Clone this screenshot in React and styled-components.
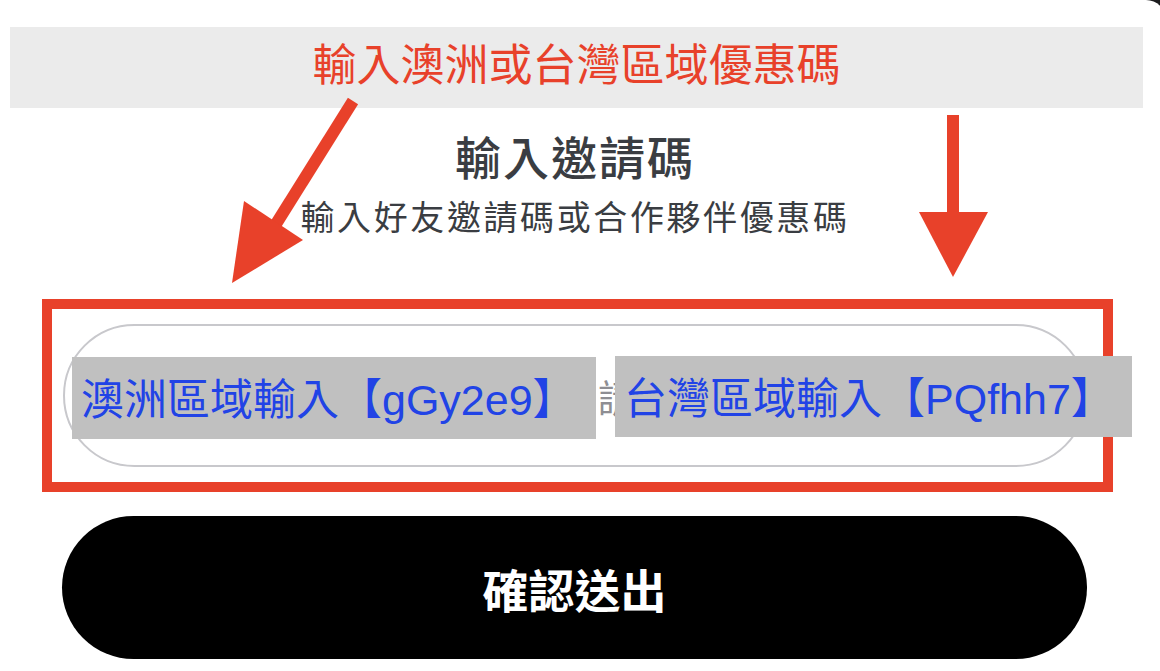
import React from "react";
import styled, { createGlobalStyle } from "styled-components";

const GlobalStyle = createGlobalStyle`
  html, body {
    margin: 0;
    padding: 0;
    background: #1c1c1e;
    overflow: hidden;
  }
  body {
    font-family: "Noto Sans CJK TC", "Liberation Sans", sans-serif;
  }
`;

const RED = "#e8412a";

const Sheet = styled.div`
  position: relative;
  width: 1166px;
  min-height: 671px;
  background: #ffffff;
  border-top-right-radius: 20px;
  display: flex;
  flex-direction: column;
`;

const Column = styled.div`
  width: 1150px;
  display: flex;
  flex-direction: column;
  align-items: flex-start;
`;

const Banner = styled.div`
  margin: 27px 0 0 10px;
  width: 1133px;
  height: 81px;
  box-sizing: border-box;
  padding-bottom: 12px;
  background: #ebebeb;
  display: flex;
  align-items: center;
  justify-content: center;
  color: ${RED};
  font-size: 44px;
  font-weight: 400;
  line-height: 1;
`;

const Title = styled.h1`
  margin: 20px 0 0;
  width: 100%;
  text-align: center;
  color: #3a3d42;
  font-size: 46px;
  font-weight: 500;
  line-height: 55px;
  letter-spacing: 2px;
`;

const Subtitle = styled.p`
  margin: 13px 0 0;
  width: 100%;
  text-align: center;
  color: #3a3d42;
  font-size: 34px;
  font-weight: 400;
  line-height: 40px;
  letter-spacing: 2.6px;
`;

const Frame = styled.div`
  margin: 63px 0 0 42px;
  width: 1071px;
  height: 193px;
  box-sizing: border-box;
  border: 10px solid ${RED};
  padding: 15px 16px 15px 11px;
`;

const Pill = styled.div`
  position: relative;
  height: 143px;
  box-sizing: border-box;
  border: 2px solid #c8c8cc;
  border-radius: 72px;
  display: flex;
  align-items: center;
`;

const CodeInput = styled.input`
  width: 100%;
  height: 100%;
  box-sizing: border-box;
  border: none;
  outline: none;
  background: transparent;
  padding: 0 0 0 533px;
  font-family: "Noto Sans CJK TC", "Liberation Sans", sans-serif;
  font-size: 38px;
  color: #333;
  &::placeholder {
    color: #8e8e93;
  }
`;

const Highlight = styled.div`
  position: absolute;
  left: ${(p) => p.$left}px;
  top: ${(p) => p.$top}px;
  width: ${(p) => p.$width}px;
  height: ${(p) => p.$height}px;
  box-sizing: border-box;
  padding: 0 0 4px 9px;
  background: #c0c0c0;
  display: flex;
  align-items: center;
  color: #2143e6;
  font-family: "Liberation Sans", "Noto Sans CJK TC", sans-serif;
  font-size: 43px;
  white-space: nowrap;
`;

const SubmitButton = styled.button`
  margin: 24px 0 0 62px;
  width: 1025px;
  height: 143px;
  border: none;
  border-radius: 72px;
  background: #000;
  color: #fff;
  font-family: "Noto Sans CJK TC", "Liberation Sans", sans-serif;
  font-size: 46px;
  font-weight: 700;
  cursor: pointer;
`;

const Arrows = styled.svg`
  position: absolute;
  left: 0;
  top: 0;
  pointer-events: none;
`;

export default function App() {
  return (
    <>
      <GlobalStyle />
      <Sheet>
        <Column>
          <Banner>輸入澳洲或台灣區域優惠碼</Banner>
          <Title>輸入邀請碼</Title>
          <Subtitle>輸入好友邀請碼或合作夥伴優惠碼</Subtitle>
          <Frame>
            <Pill>
              <CodeInput placeholder="請輸入邀請碼" />
              <Highlight $left={7} $top={31} $width={524} $height={82}>
                澳洲區域輸入【gGy2e9】
              </Highlight>
              <Highlight $left={550} $top={30} $width={517} $height={81}>
                台灣區域輸入【PQfhh7】
              </Highlight>
            </Pill>
          </Frame>
          <SubmitButton>確認送出</SubmitButton>
        </Column>
        <Arrows width="1160" height="671" viewBox="0 0 1160 671">
          <line x1="353" y1="101" x2="276" y2="224" stroke={RED} strokeWidth="12" />
          <polygon points="232,283 244,201 303,240" fill={RED} />
          <line x1="953" y1="115" x2="953" y2="216" stroke={RED} strokeWidth="12" />
          <polygon points="919,212 988,212 953,277" fill={RED} />
        </Arrows>
      </Sheet>
    </>
  );
}
